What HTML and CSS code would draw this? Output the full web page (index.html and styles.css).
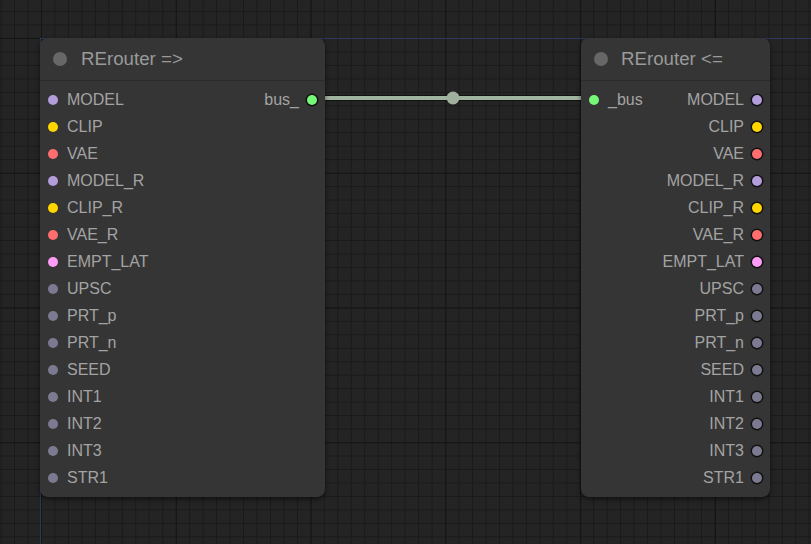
FILE: index.html
```html
<!DOCTYPE html>
<html>
<head>
<meta charset="utf-8">
<link rel="stylesheet" href="styles.css">
</head>
<body>
<div class="canvas">
  <div class="axis axis-h"></div>
  <div class="axis axis-v"></div>

  <svg class="links" width="811" height="544" viewBox="0 0 811 544">
    <line x1="316" y1="98" x2="583" y2="98" stroke="#111" stroke-width="6"/>
    <line x1="316" y1="98" x2="583" y2="98" stroke="#9fb39f" stroke-width="4"/>
    <circle cx="453" cy="98" r="6.5" fill="#9fb09f"/>
  </svg>

  <div class="node node-left">
    <div class="node-title"><span class="title-dot"></span><span class="title-text">RErouter =&gt;</span></div>
    <div class="node-body">
      <div class="row"><span class="slot in"><i class="dot c-model"></i>MODEL</span><span class="slot out">bus_<i class="dot c-bus ring"></i></span></div>
      <div class="row"><span class="slot in"><i class="dot c-clip"></i>CLIP</span></div>
      <div class="row"><span class="slot in"><i class="dot c-vae"></i>VAE</span></div>
      <div class="row"><span class="slot in"><i class="dot c-model"></i>MODEL_R</span></div>
      <div class="row"><span class="slot in"><i class="dot c-clip"></i>CLIP_R</span></div>
      <div class="row"><span class="slot in"><i class="dot c-vae"></i>VAE_R</span></div>
      <div class="row"><span class="slot in"><i class="dot c-lat"></i>EMPT_LAT</span></div>
      <div class="row"><span class="slot in"><i class="dot c-any"></i>UPSC</span></div>
      <div class="row"><span class="slot in"><i class="dot c-any"></i>PRT_p</span></div>
      <div class="row"><span class="slot in"><i class="dot c-any"></i>PRT_n</span></div>
      <div class="row"><span class="slot in"><i class="dot c-any"></i>SEED</span></div>
      <div class="row"><span class="slot in"><i class="dot c-any"></i>INT1</span></div>
      <div class="row"><span class="slot in"><i class="dot c-any"></i>INT2</span></div>
      <div class="row"><span class="slot in"><i class="dot c-any"></i>INT3</span></div>
      <div class="row"><span class="slot in"><i class="dot c-any"></i>STR1</span></div>
    </div>
  </div>

  <div class="node node-right">
    <div class="node-title"><span class="title-dot"></span><span class="title-text">RErouter &lt;=</span></div>
    <div class="node-body">
      <div class="row"><span class="slot in"><i class="dot c-bus"></i>_bus</span><span class="slot out">MODEL<i class="dot c-model ring"></i></span></div>
      <div class="row"><span class="slot out">CLIP<i class="dot c-clip ring"></i></span></div>
      <div class="row"><span class="slot out">VAE<i class="dot c-vae ring"></i></span></div>
      <div class="row"><span class="slot out">MODEL_R<i class="dot c-model ring"></i></span></div>
      <div class="row"><span class="slot out">CLIP_R<i class="dot c-clip ring"></i></span></div>
      <div class="row"><span class="slot out">VAE_R<i class="dot c-vae ring"></i></span></div>
      <div class="row"><span class="slot out">EMPT_LAT<i class="dot c-lat ring"></i></span></div>
      <div class="row"><span class="slot out">UPSC<i class="dot c-any ring"></i></span></div>
      <div class="row"><span class="slot out">PRT_p<i class="dot c-any ring"></i></span></div>
      <div class="row"><span class="slot out">PRT_n<i class="dot c-any ring"></i></span></div>
      <div class="row"><span class="slot out">SEED<i class="dot c-any ring"></i></span></div>
      <div class="row"><span class="slot out">INT1<i class="dot c-any ring"></i></span></div>
      <div class="row"><span class="slot out">INT2<i class="dot c-any ring"></i></span></div>
      <div class="row"><span class="slot out">INT3<i class="dot c-any ring"></i></span></div>
      <div class="row"><span class="slot out">STR1<i class="dot c-any ring"></i></span></div>
    </div>
  </div>
</div>
</body>
</html>
```

FILE: styles.css
```css
html, body {
  margin: 0;
  padding: 0;
  width: 811px;
  height: 544px;
  overflow: hidden;
}

body {
  font-family: "Liberation Sans", Arial, sans-serif;
  background-color: #242424;
}

.canvas {
  position: relative;
  width: 811px;
  height: 544px;
  background-color: #242424;
  background-image:
    linear-gradient(to right, #151515 1px, transparent 1px),
    linear-gradient(to bottom, #151515 1px, transparent 1px),
    linear-gradient(to right, #1a1a1a 1px, transparent 1px),
    linear-gradient(to bottom, #1a1a1a 1px, transparent 1px);
  background-size: 134.8px 134.8px, 134.8px 134.8px, 13.48px 13.48px, 13.48px 13.48px;
  background-position: 41px 38px, 41px 38px, 41px 38px, 41px 38px;
}

.axis {
  position: absolute;
  background: #2b3a5c;
}
.axis-h { left: 40px; top: 38px; width: 771px; height: 1px; }
.axis-v { left: 40px; top: 38px; width: 1px; height: 506px; }

.links {
  position: absolute;
  left: 0;
  top: 0;
}

.node {
  position: absolute;
  top: 38px;
  height: 459px;
  background: #353535;
  border-radius: 8px;
  box-shadow: 0 2px 5px rgba(0, 0, 0, 0.55);
  display: flex;
  flex-direction: column;
  color: #a3a3a3;
}
.node-left { left: 40px; width: 285px; }
.node-right { left: 581px; width: 189px; }

.node-title {
  height: 43px;
  border-bottom: 1px solid #2b2b2b;
  display: flex;
  align-items: center;
  padding-left: 13px;
  gap: 14px;
  box-sizing: border-box;
}
.title-dot {
  width: 14px;
  height: 14px;
  border-radius: 50%;
  background: #676767;
  flex: none;
}
.title-text {
  font-size: 18.7px;
  color: #9a9a9a;
}
.node-right .title-text { margin-left: -1px; }

.node-body {
  padding-top: 5px;
  display: flex;
  flex-direction: column;
}

.row {
  height: 27px;
  display: flex;
  align-items: center;
  justify-content: space-between;
  font-size: 16px;
}

.slot {
  display: flex;
  align-items: center;
}
.slot.in { padding-left: 8px; gap: 9px; }
.slot.out { padding-right: 8px; gap: 8px; margin-left: auto; }
.node-right .slot.out { gap: 8px; }
.row .slot.in + .slot.out { margin-left: 0; }

.dot {
  display: block;
  width: 10px;
  height: 10px;
  border-radius: 50%;
  flex: none;
}
.dot.ring {
  width: 10px;
  height: 10px;
  box-shadow: 0 0 0 1.5px #111;
}

.c-model { background: #b39ddb; }
.c-clip { background: #ffd500; }
.c-vae { background: #ff6e6e; }
.c-lat { background: #ff9cf9; }
.c-any { background: #7c7a90; }
.c-bus { background: #77f777; }
```
